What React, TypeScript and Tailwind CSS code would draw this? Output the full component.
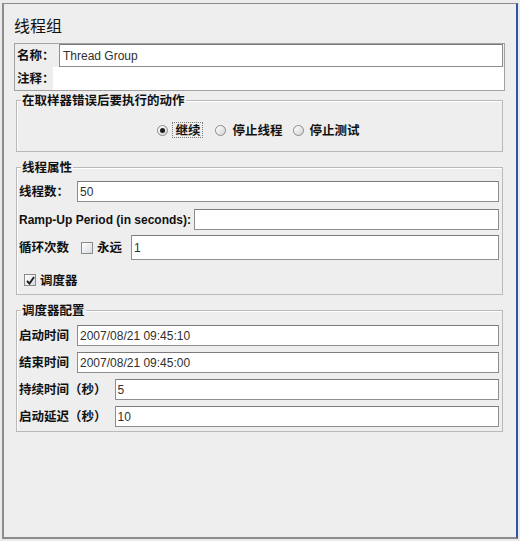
import React from 'react';

const cjk = "font-['Noto_Sans_CJK_SC',sans-serif]";
const latin = "font-['Liberation_Sans','Noto_Sans_CJK_SC',sans-serif]";

function TextField({ value = '', className = '' }: { value?: string; className?: string }) {
  return (
    <div
      className={`flex h-[21px] min-w-0 flex-1 items-center border border-[#8e8e8e] border-t-[#7c7c7c] bg-white pl-[2px] text-[12px] text-[#303030] ${latin} ${className}`}
    >
      {value}
    </div>
  );
}

function Radio({ checked = false }: { checked?: boolean }) {
  return (
    <span className="flex h-[11px] w-[11px] items-center justify-center rounded-full border border-[#8a8a8a] bg-gradient-to-br from-white to-[#d4d4d4]">
      {checked && <span className="h-[5px] w-[5px] rounded-full bg-[#1e1e1e]" />}
    </span>
  );
}

function CheckBox({ checked = false }: { checked?: boolean }) {
  return (
    <span className="flex h-[12px] w-[12px] items-center justify-center border border-[#8a8a8a] bg-gradient-to-br from-white to-[#d6dbe2]">
      {checked && (
        <svg width="9" height="9" viewBox="0 0 9 9">
          <path d="M1 5 L3.5 7.5 L8 1" fill="none" stroke="#1a1a1a" strokeWidth="1.8" />
        </svg>
      )}
    </span>
  );
}

function Group({ title, className = '', children }: { title: string; className?: string; children: React.ReactNode }) {
  return (
    <fieldset className={`mx-[2px] border border-[#b9b9b9] shadow-[inset_1px_1px_0_#ffffff] ${className}`}>
      <legend className={`ml-[4px] px-[1px] text-[12.5px] font-bold leading-[14px] text-[#111] ${cjk}`}>{title}</legend>
      {children}
    </fieldset>
  );
}

function FieldRow({ label, value, latinLabel = false, className = '' }: { label: string; value?: string; latinLabel?: boolean; className?: string }) {
  return (
    <div className={`flex items-center ${className}`}>
      <span
        className={`whitespace-nowrap font-bold text-[#111] ${latinLabel ? `mr-[3px] text-[12px] ${latin}` : `mr-[8px] text-[12.5px] ${cjk}`}`}
      >
        {label}
      </span>
      <TextField value={value} />
    </div>
  );
}

export default function App() {
  return (
    <div className="h-[541px] w-[520px] overflow-hidden bg-[#ebebeb] pl-[2px] pt-[3px]">
      <div className="h-[536px] w-[516px] border-b-2 border-l-2 border-r-2 border-t border-[#8c8c8c] border-r-[#2f56a6] bg-[#eeeeee] pl-[10px] pr-[11px] pt-[11px]">
        <h1 className={`text-[16px] leading-[20px] font-normal text-[#111] ${cjk}`}>线程组</h1>

        <div className="mt-[8px] border border-[#a2a2a2]">
          <div className="flex h-[23px] items-stretch">
            <span className={`flex w-[44px] shrink-0 items-center whitespace-nowrap pl-[2px] text-[12.5px] font-bold text-[#111] ${cjk}`}>名称：</span>
            <div
              className={`mr-[1px] flex flex-1 items-center border border-[#8e8e8e] border-t-[#7c7c7c] bg-white pl-[3px] text-[12px] text-[#303030] ${latin}`}
            >
              Thread Group
            </div>
          </div>
          <div className="flex h-[23px] items-stretch">
            <span className={`flex w-[38px] shrink-0 items-center whitespace-nowrap pl-[2px] text-[12.5px] font-bold text-[#111] ${cjk}`}>注释：</span>
            <div className="flex-1 bg-white" />
          </div>
        </div>

        <Group title="在取样器错误后要执行的动作" className="mt-[2px]">
          <div className={`flex items-center justify-center pb-[13px] pt-[15px] text-[12.5px] font-bold text-[#111] ${cjk}`}>
            <div className="flex items-center gap-[4px]">
              <Radio checked />
              <span className="border border-dotted border-[#7a7a7a] px-[2px] leading-[14px]">继续</span>
            </div>
            <div className="ml-[12px] flex items-center gap-[4px]">
              <Radio />
              <span className="border border-transparent px-[1px] leading-[14px]">停止线程</span>
            </div>
            <div className="ml-[8px] flex items-center gap-[4px]">
              <Radio />
              <span className="border border-transparent px-[1px] leading-[14px]">停止测试</span>
            </div>
          </div>
        </Group>

        <Group title="线程属性" className="mt-[8px]">
          <div className="pb-[6px] pl-[2px] pr-[3px] pt-[7px]">
            <FieldRow label="线程数：" value="50" />
            <FieldRow label="Ramp-Up Period (in seconds):" latinLabel className="mt-[7px]" />
            <div className="mt-[5px] flex items-center">
              <span className={`whitespace-nowrap text-[12.5px] font-bold text-[#111] ${cjk}`}>循环次数</span>
              <span className="ml-[12px]">
                <CheckBox />
              </span>
              <span className={`ml-[4px] mr-[9px] text-[12.5px] font-bold text-[#111] ${cjk}`}>永远</span>
              <TextField value="1" className="h-[25px]" />
            </div>
            <div className="mt-[12px] flex h-[16px] items-center pl-[5px]">
              <CheckBox checked />
              <span className={`ml-[4px] text-[12.5px] font-bold text-[#111] ${cjk}`}>调度器</span>
            </div>
          </div>
        </Group>

        <Group title="调度器配置" className="mt-[8px]">
          <div className="flex flex-col gap-[6px] pb-[4px] pl-[2px] pr-[3px] pt-[8px]">
            <FieldRow label="启动时间" value="2007/08/21 09:45:10" />
            <FieldRow label="结束时间" value="2007/08/21 09:45:00" />
            <FieldRow label="持续时间（秒）" value="5" />
            <FieldRow label="启动延迟（秒）" value="10" />
          </div>
        </Group>
      </div>
    </div>
  );
}
